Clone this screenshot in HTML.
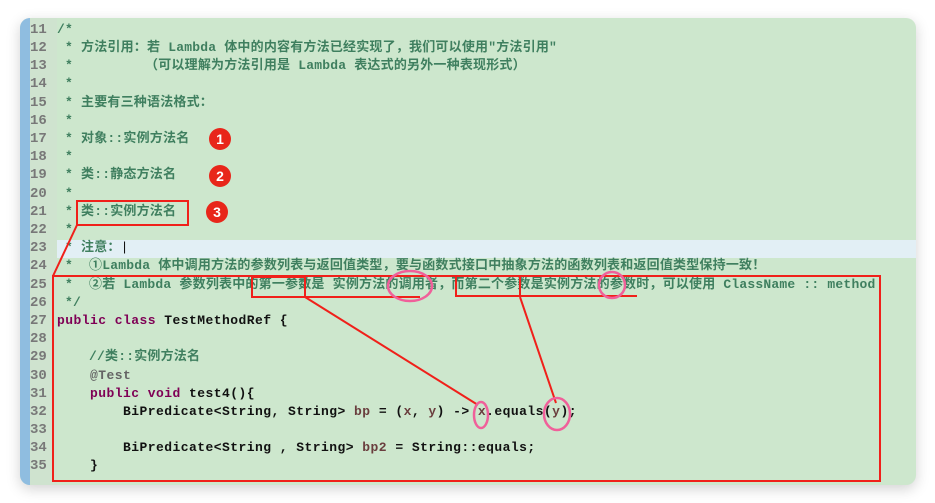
<!DOCTYPE html>
<html><head><meta charset="utf-8"><style>
body{margin:0;width:935px;height:503px;background:#fff;overflow:hidden;position:relative;font-family:"Liberation Mono","Noto Sans CJK SC",monospace;}
.win{position:absolute;left:20px;top:18px;width:896px;height:467px;background:#cde7cd;border-radius:10px;box-shadow:0 4px 14px rgba(0,0,0,.18);overflow:hidden}
.strip{position:absolute;left:0;top:0;width:10px;height:100%;background:#8fbde0}
.gut{position:absolute;left:10px;top:0;width:27px;height:100%;background:#cfe3cf}
.hl{position:absolute;left:37px;top:222px;width:859px;height:18px;background:#e2eff5}
.ln{position:absolute;left:30px;width:20px;text-align:left;font-size:14px;color:#787878;font-weight:bold;line-height:18px}
.c{position:absolute;left:57px;font-size:13px;letter-spacing:0.2px;line-height:18px;white-space:pre;font-weight:bold;color:#3f7f5f}
.c.b,.c.a{letter-spacing:0.45px}
.k{color:#7f0055}.b{color:#111}.v{color:#6a3e3e}.a{color:#646464}
</style></head><body>
<div class="win"><div class="strip"></div><div class="gut"></div><div class="hl"></div></div>
<div class="ln" style="top:21px">11</div><div class="c" style="top:21px">/*</div>
<div class="ln" style="top:39px">12</div><div class="c" style="top:39px"> * 方法引用：若 Lambda 体中的内容有方法已经实现了，我们可以使用"方法引用"</div>
<div class="ln" style="top:57px">13</div><div class="c" style="top:57px"> *         （可以理解为方法引用是 Lambda 表达式的另外一种表现形式）</div>
<div class="ln" style="top:75px">14</div><div class="c" style="top:75px"> *</div>
<div class="ln" style="top:94px">15</div><div class="c" style="top:94px"> * 主要有三种语法格式：</div>
<div class="ln" style="top:112px">16</div><div class="c" style="top:112px"> *</div>
<div class="ln" style="top:130px">17</div><div class="c" style="top:130px"> * 对象::实例方法名</div>
<div class="ln" style="top:148px">18</div><div class="c" style="top:148px"> *</div>
<div class="ln" style="top:166px">19</div><div class="c" style="top:166px"> * 类::静态方法名</div>
<div class="ln" style="top:185px">20</div><div class="c" style="top:185px"> *</div>
<div class="ln" style="top:203px">21</div><div class="c" style="top:203px"> * 类::实例方法名</div>
<div class="ln" style="top:221px">22</div><div class="c" style="top:221px"> *</div>
<div class="ln" style="top:239px">23</div><div class="c" style="top:239px"> * 注意：<span class="b" style="font-weight:normal">|</span></div>
<div class="ln" style="top:257px">24</div><div class="c" style="top:257px"> *  ①Lambda 体中调用方法的参数列表与返回值类型，要与函数式接口中抽象方法的函数列表和返回值类型保持一致！</div>
<div class="ln" style="top:276px">25</div><div class="c" style="top:276px"> *  ②若 Lambda 参数列表中的第一参数是 实例方法的调用者，而第二个参数是实例方法的参数时，可以使用 ClassName :: method</div>
<div class="ln" style="top:294px">26</div><div class="c" style="top:294px"> */</div>
<div class="ln" style="top:312px">27</div><div class="c b" style="top:312px"><span class="k">public class</span> TestMethodRef {</div>
<div class="ln" style="top:330px">28</div>
<div class="ln" style="top:348px">29</div><div class="c" style="top:348px">    //类::实例方法名</div>
<div class="ln" style="top:367px">30</div><div class="c a" style="top:367px">    @Test</div>
<div class="ln" style="top:385px">31</div><div class="c b" style="top:385px">    <span class="k">public void</span> test4(){</div>
<div class="ln" style="top:403px">32</div><div class="c b" style="top:403px">        BiPredicate&lt;String, String&gt; <span class="v">bp</span> = (<span class="v">x</span>, <span class="v">y</span>) -&gt; <span class="v">x</span>.equals(<span class="v">y</span>);</div>
<div class="ln" style="top:421px">33</div>
<div class="ln" style="top:439px">34</div><div class="c b" style="top:439px">        BiPredicate&lt;String , String&gt; <span class="v">bp2</span> = String::equals;</div>
<div class="ln" style="top:457px">35</div><div class="c b" style="top:457px">    }</div>
<svg width="935" height="503" style="position:absolute;left:0;top:0" fill="none">
<g fill="#e8261a"><circle cx="220" cy="139" r="11"/><circle cx="220" cy="176" r="11"/><circle cx="217" cy="212" r="11"/></g>
<g fill="#fff" font-family="Liberation Sans" font-size="14" font-weight="bold" text-anchor="middle"><text x="220" y="144">1</text><text x="220" y="181">2</text><text x="217" y="217">3</text></g>
<g stroke="#f0201a" stroke-width="2">
<rect x="77" y="201" width="111" height="24"/>
<line x1="77" y1="225" x2="53" y2="276"/>
<rect x="53" y="276" width="827" height="205"/>
<polyline points="252,277 252,297 305,297 305,277 252,277"/>
<line x1="305" y1="297" x2="420" y2="297"/>
<rect x="456" y="276" width="64" height="20"/>
<line x1="520" y1="296" x2="637" y2="296"/>
<line x1="305" y1="297" x2="478" y2="405"/>
<line x1="520" y1="297" x2="556" y2="403"/>
</g>
<g stroke="#f0609a" stroke-width="2.5">
<ellipse cx="410" cy="286" rx="22" ry="15"/>
<ellipse cx="612" cy="285" rx="13" ry="13"/>
<ellipse cx="481" cy="415" rx="7" ry="13"/>
<ellipse cx="557" cy="414" rx="13" ry="16"/>
</g>
</svg>
</body></html>
